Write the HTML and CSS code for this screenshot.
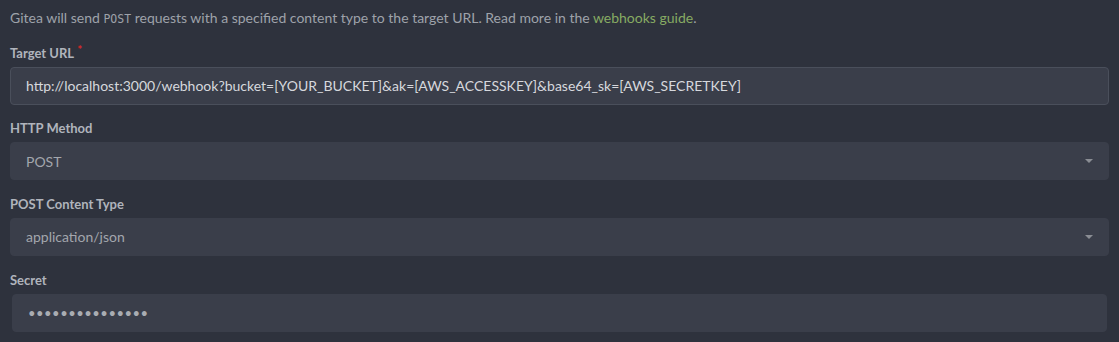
FILE: index.html
```html
<!DOCTYPE html>
<html>
	<head>
		<meta charset="UTF-8">
		<title>Webhook</title>
		<link rel="stylesheet" href="styles.css">
	</head>
	<body>
		<form class="hook-form">
			<p class="desc">Gitea will send <code>POST</code> requests with a specified content type to the target URL. Read more in the <a href="javascript:;">webhooks guide</a>.</p>
			<div class="field required">
				<label>Target URL</label>
				<div class="input focus">http://localhost:3000/webhook?bucket=[YOUR_BUCKET]&amp;ak=[AWS_ACCESSKEY]&amp;base64_sk=[AWS_SECRETKEY]</div>
			</div>
			<div class="field">
				<label>HTTP Method</label>
				<div class="input select">POST<i class="caret"></i></div>
			</div>
			<div class="field">
				<label>POST Content Type</label>
				<div class="input select">application/json<i class="caret"></i></div>
			</div>
			<div class="field">
				<label>Secret</label>
				<div class="input secret">•••••••••••••••</div>
			</div>
		</form>
	</body>
</html>
```
FILE: styles.css
```css
html,
body {
	margin: 0;
	background: #2e323d;
}

body {
	font-family: Lato, "Liberation Sans", sans-serif;
	font-size: 14px;
	color: #9ea2aa;
}

.hook-form {
	display: flex;
	flex-direction: column;
	gap: 15.67px;
	padding: 8px 10px 0 10px;
}

.desc {
	margin: 0;
	line-height: 20px;
}

.desc code {
	font-family: "DejaVu Sans Mono", monospace;
	font-size: 11.5px;
}

.desc a {
	color: #87ab63;
	text-decoration: none;
}

.field {
	display: flex;
	flex-direction: column;
	gap: 6px;
}

.field label {
	font-size: 13px;
	font-weight: 700;
	line-height: 16px;
	height: 16px;
	color: #b0b4bc;
}

.required label:after {
	content: "*";
	color: #db2828;
	margin-left: 3px;
	position: relative;
	top: -4px;
	font-size: 12px;
}

.input {
	height: 38px;
	box-sizing: border-box;
	border: 1px solid #3a3e4a;
	border-radius: 4px;
	background: #3a3e4a;
	padding: 0 15px;
	display: flex;
	align-items: center;
	color: #a3a6ad;
}

.input.focus {
	border-color: #4a4f5b;
	color: #d6d8dd;
}

.select {
	justify-content: space-between;
}

.caret {
	width: 0;
	height: 0;
	border-left: 4px solid transparent;
	border-right: 4px solid transparent;
	border-top: 4px solid #8a8d94;
}

.secret {
	margin: 0 2px;
	letter-spacing: 0.5px;
	font-size: 13px;
	color: #a9acb2;
}
```
